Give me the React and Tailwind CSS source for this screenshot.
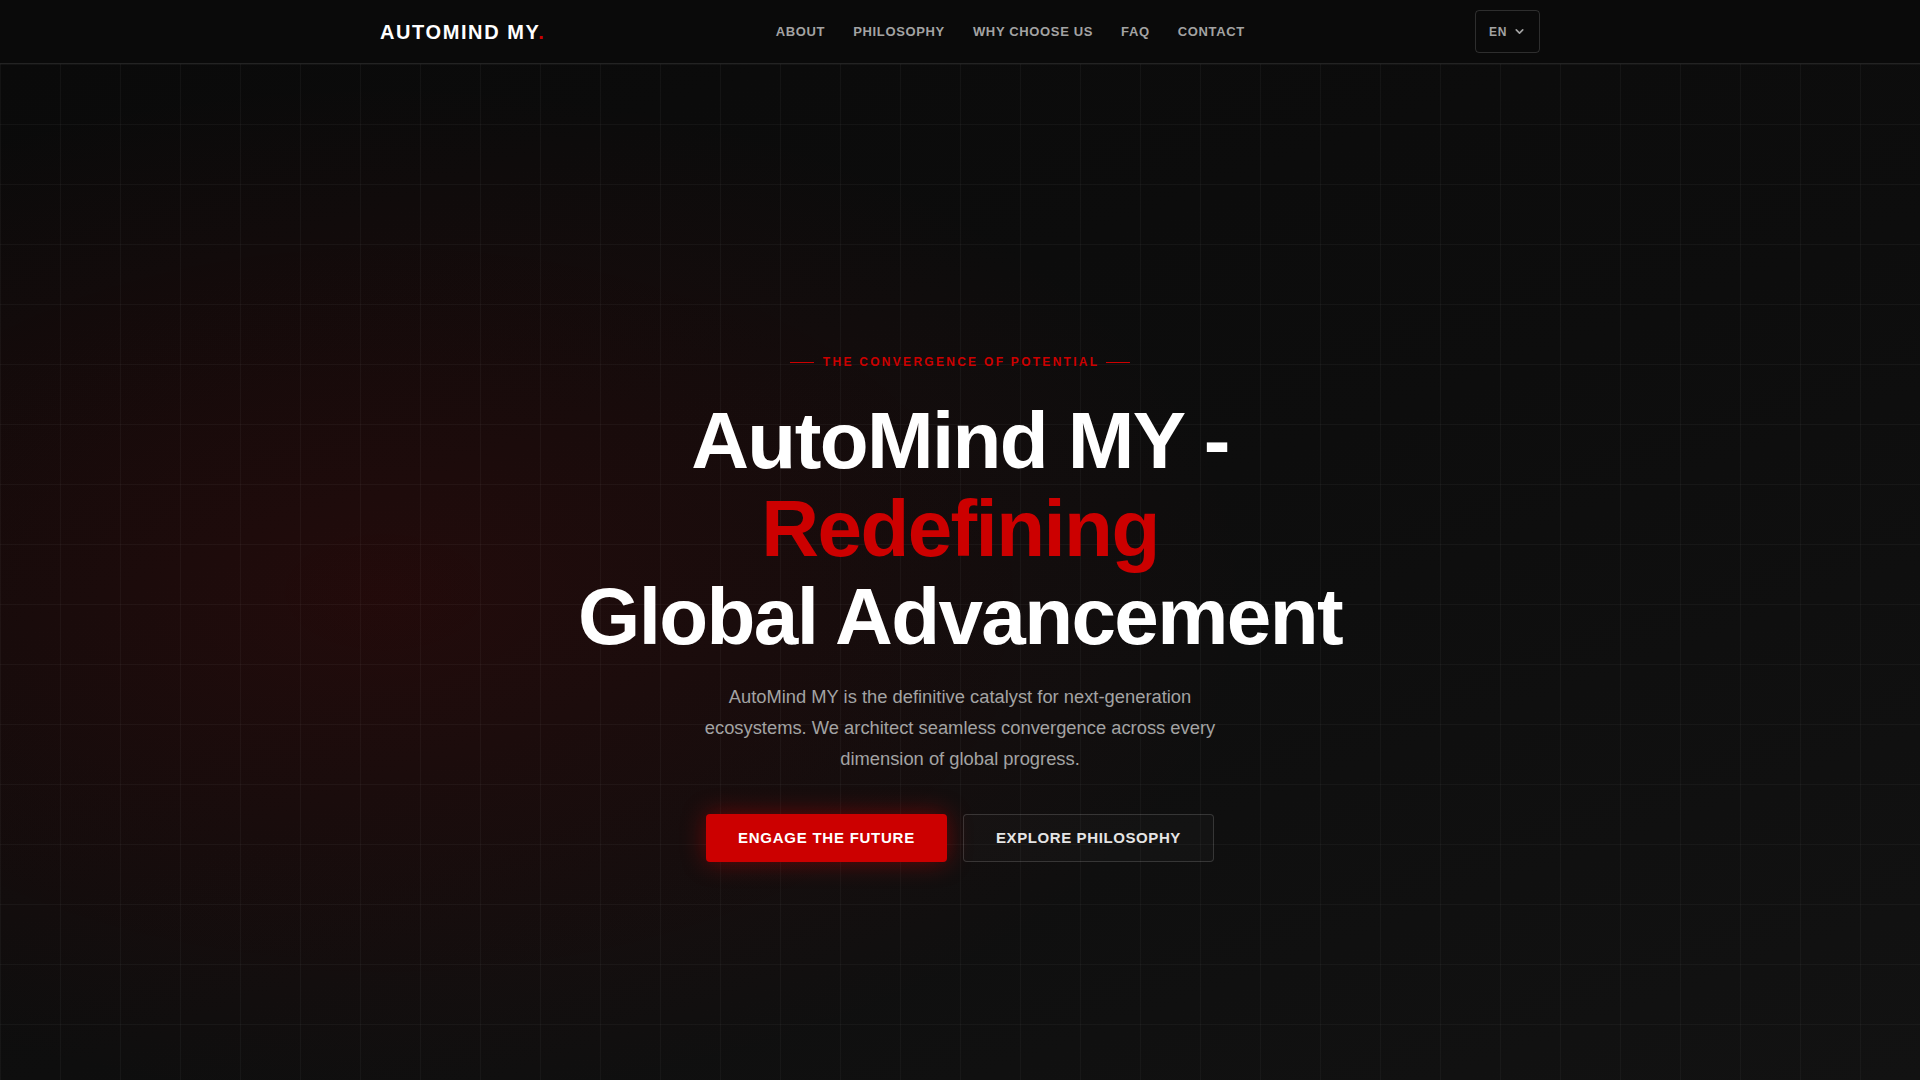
import { ChevronDown } from 'lucide-react';

const navItems = ['About', 'Philosophy', 'Why Choose Us', 'FAQ', 'Contact'];

function Header() {
  return (
    <header className="h-16 bg-[#0a0a0a] border-b border-white/10">
      <div className="max-w-[1200px] mx-auto px-5 h-full flex items-center justify-between">
        <div className="text-[20px] font-bold tracking-[0.08em] text-white">
          AUTOMIND MY<span className="text-[#cc0000]">.</span>
        </div>
        <nav className="flex items-center gap-7">
          {navItems.map(item => (
            <a key={item} href="#" className="text-[13px] font-bold uppercase tracking-[0.05em] text-[#a3a3a3]">
              {item}
            </a>
          ))}
        </nav>
        <button className="h-[43px] px-[13px] flex items-center gap-1.5 border border-white/15 rounded text-[12px] font-bold tracking-[0.05em] text-[#a3a3a3]">
          EN
          <ChevronDown size={13} strokeWidth={3} />
        </button>
      </div>
    </header>
  );
}

function Hero() {
  return (
    <section className="relative h-[1016px] overflow-hidden bg-[linear-gradient(160deg,#0a0a0a_0%,#0d0d0d_50%,#121212_100%)]">
      <div className="absolute inset-0 bg-[radial-gradient(ellipse_45%_50%_at_20%_52%,rgba(170,0,0,0.14),transparent_100%)]" />
      <div className="absolute inset-0 bg-[linear-gradient(to_right,rgba(255,255,255,0.035)_1px,transparent_1px),linear-gradient(to_bottom,rgba(255,255,255,0.035)_1px,transparent_1px)] bg-[size:60px_60px]" />
      <div className="relative h-full flex flex-col items-center justify-center pt-[72px] text-center">
        <div className="flex items-center gap-[9px] mb-[27px]">
          <span className="w-6 h-px bg-[#cc0000]" />
          <span className="text-[12px] font-bold tracking-[0.19em] text-[#cc0000] leading-4 mr-[-0.19em]">
            THE CONVERGENCE OF POTENTIAL
          </span>
          <span className="w-6 h-px bg-[#cc0000]" />
        </div>
        <h1 className="text-[80px] font-bold leading-[88px] tracking-[-0.02em] text-white">
          AutoMind MY -<br />
          <span className="text-[#cc0000]">Redefining</span><br />
          Global Advancement
        </h1>
        <p className="mt-5 max-w-[550px] text-[18.35px] leading-[31px] text-[#a3a3a3]">
          AutoMind MY is the definitive catalyst for next-generation ecosystems. We architect seamless convergence across every dimension of global progress.
        </p>
        <div className="mt-10 flex items-center gap-4">
          <button className="h-12 px-8 rounded bg-[#cc0000] text-white text-[15px] font-bold tracking-[0.05em] shadow-[0_0_24px_rgba(204,0,0,0.45)]">
            ENGAGE THE FUTURE
          </button>
          <button className="h-12 px-8 rounded border border-white/15 bg-white/[0.02] text-[#e5e5e5] text-[15px] font-bold tracking-[0.04em]">
            EXPLORE PHILOSOPHY
          </button>
        </div>
      </div>
    </section>
  );
}

export default function App() {
  return (
    <div className="min-h-screen bg-[#0a0a0a] font-['Liberation_Sans',Arial,sans-serif]">
      <Header />
      <Hero />
    </div>
  );
}
